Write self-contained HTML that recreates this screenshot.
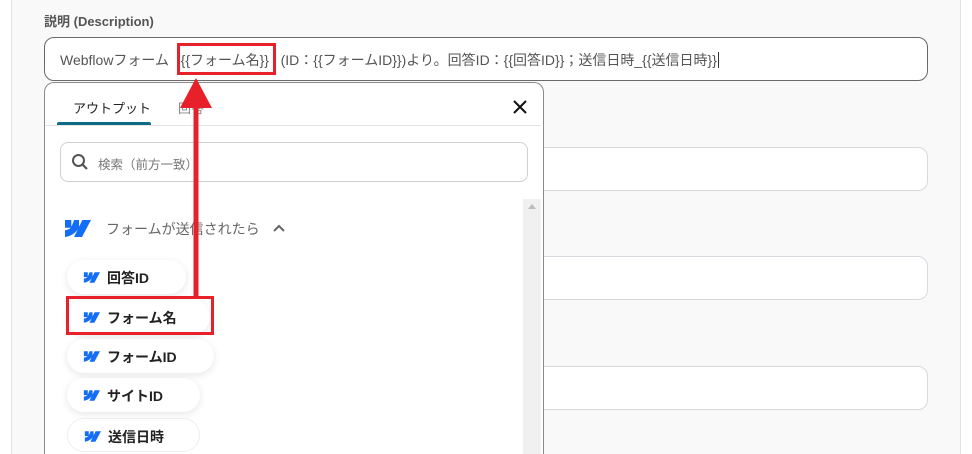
<!DOCTYPE html>
<html style="width:972px;height:454px;overflow:hidden"><head><meta charset="utf-8"><style>
*{box-sizing:border-box;margin:0;padding:0}
body{width:972px;height:454px;overflow:hidden;background:#fff;font-family:"Liberation Sans","Noto Sans CJK JP",sans-serif;position:relative}
.panel{position:absolute;left:11px;top:0;width:950px;height:454px;background:#f9f9f9;border-left:1px solid #e2e2e2;border-right:1px solid #e2e2e2}
.abs{position:absolute}
.lbl{left:44px;top:11px;font-size:13px;font-weight:bold;color:#555}
.desc{left:44px;top:37px;width:884px;height:44px;border:1px solid #6a6a6a;border-radius:10px;background:#fff;font-size:14px;color:#555;padding:12px 0 0 15px;white-space:nowrap;overflow:hidden}
.inp{left:500px;width:428px;height:44px;border:1px solid #d6d9de;border-radius:10px;background:#fff}
.pop{left:44px;top:82px;width:500px;height:372px;border:1px solid #8a8a8a;border-bottom:none;border-radius:10px 10px 0 0;background:#fff;overflow:hidden}
.tab{left:28px;top:15px;font-size:13px;color:#222}
.tab2{left:133px;top:15px;font-size:13px;color:#888}
.ul{left:12px;top:39px;width:94px;height:4px;background:#0f6a85;border-radius:2px 2px 0 0}
.div{left:0;top:42px;width:496px;height:1px;background:#e3e3e3}
.search{left:15px;top:59px;width:468px;height:40px;border:1px solid #d0d0d0;border-radius:8px;font-size:12.5px;color:#777;padding:11px 0 0 37px}
.sb{left:478px;top:116px;width:18px;height:256px;background:#f0f0f0}
.sec{left:61px;top:136px;font-size:14px;color:#666}
.pill{left:22px;height:34px;border-radius:17px;background:#fff;box-shadow:0 2px 8px rgba(0,0,0,.1);font-size:14px;font-weight:bold;color:#222;padding:8px 14px 0 40px}
.pill svg{position:absolute;left:15px;top:12px}
.red{border:3px solid #e8202a}
</style></head><body>
<div class="panel"></div>
<div class="abs lbl">説明 (Description)</div>
<div class="abs desc">Webflowフォーム&nbsp;&nbsp; {{フォーム名}}&nbsp;&nbsp; (ID：{{フォームID}})より。回答ID：{{回答ID}}；送信日時_{{送信日時}}<span style="border-left:1px solid #333;margin-left:1px"></span></div>
<div class="abs inp" style="top:147px"></div>
<div class="abs inp" style="top:256px"></div>
<div class="abs inp" style="top:366px"></div>
<div class="abs pop">
 <div class="abs tab">アウトプット</div>
 <div class="abs tab2">回答</div>
 <div class="abs ul"></div>
 <div class="abs div"></div>
 <svg class="abs" style="left:467px;top:16px" width="16" height="16" viewBox="0 0 16 16"><path d="M2 2L14 14M14 2L2 14" stroke="#111" stroke-width="2"/></svg>
 <div class="abs search">検索（前方一致）</div>
 <svg class="abs" style="left:26px;top:70px" width="18" height="18" viewBox="0 0 18 18"><circle cx="7.5" cy="7.5" r="5.5" fill="none" stroke="#555" stroke-width="2"/><path d="M11.5 11.5L16 16" stroke="#555" stroke-width="2.2"/></svg>
 <div class="abs sb"><svg class="abs" style="left:5px;top:5px" width="8" height="5"><path d="M0 5L4 0L8 5Z" fill="#bbb"/></svg></div>
 <svg class="abs" style="left:17px;top:137px" width="29" height="17" viewBox="0 0 29 17"><path d="M29 0L20 17H12L15.5 10H15.3C12.5 13.8 8.5 16.2 3 17V10.2C3 10.2 6.6 10 8.8 7.8H3V0H9.3V6.2L9.6 6.2L12.2 0H17V6.2L17.3 6.2L20.3 0Z" fill="#146ef5"/></svg>
 <div class="abs sec">フォームが送信されたら</div>
 <svg class="abs" style="left:228px;top:141px" width="12" height="8"><path d="M1 7L6 2L11 7" stroke="#666" stroke-width="2" fill="none"/></svg>
</div>
<div class="abs pill" style="left:67px;top:260px;width:119px"><svg width="18" height="11" viewBox="0 0 29 17"><path d="M29 0L20 17H12L15.5 10H15.3C12.5 13.8 8.5 16.2 3 17V10.2C3 10.2 6.6 10 8.8 7.8H3V0H9.3V6.2L9.6 6.2L12.2 0H17V6.2L17.3 6.2L20.3 0Z" fill="#146ef5"/></svg>回答ID</div>
<div class="abs pill" style="left:67px;top:300px;width:143px"><svg width="18" height="11" viewBox="0 0 29 17"><path d="M29 0L20 17H12L15.5 10H15.3C12.5 13.8 8.5 16.2 3 17V10.2C3 10.2 6.6 10 8.8 7.8H3V0H9.3V6.2L9.6 6.2L12.2 0H17V6.2L17.3 6.2L20.3 0Z" fill="#146ef5"/></svg>フォーム名</div>
<div class="abs pill" style="left:67px;top:339px;width:147px"><svg width="18" height="11" viewBox="0 0 29 17"><path d="M29 0L20 17H12L15.5 10H15.3C12.5 13.8 8.5 16.2 3 17V10.2C3 10.2 6.6 10 8.8 7.8H3V0H9.3V6.2L9.6 6.2L12.2 0H17V6.2L17.3 6.2L20.3 0Z" fill="#146ef5"/></svg>フォームID</div>
<div class="abs pill" style="left:67px;top:378px;width:133px"><svg width="18" height="11" viewBox="0 0 29 17"><path d="M29 0L20 17H12L15.5 10H15.3C12.5 13.8 8.5 16.2 3 17V10.2C3 10.2 6.6 10 8.8 7.8H3V0H9.3V6.2L9.6 6.2L12.2 0H17V6.2L17.3 6.2L20.3 0Z" fill="#146ef5"/></svg>サイトID</div>
<div class="abs pill" style="left:67px;top:418px;width:133px;height:34px;box-shadow:none;border:1px solid #eee"><svg width="18" height="11" viewBox="0 0 29 17"><path d="M29 0L20 17H12L15.5 10H15.3C12.5 13.8 8.5 16.2 3 17V10.2C3 10.2 6.6 10 8.8 7.8H3V0H9.3V6.2L9.6 6.2L12.2 0H17V6.2L17.3 6.2L20.3 0Z" fill="#146ef5"/></svg>送信日時</div>
<div class="abs red" style="left:177px;top:43px;width:99px;height:32px"></div>
<div class="abs red" style="left:66px;top:296px;width:148px;height:39px"></div>
<svg class="abs" style="left:178px;top:76px" width="36" height="222"><path d="M18 2L34 32H2Z" fill="#e8202a"/><rect x="15.5" y="30" width="5" height="192" fill="#e8202a"/></svg>
</body></html>
